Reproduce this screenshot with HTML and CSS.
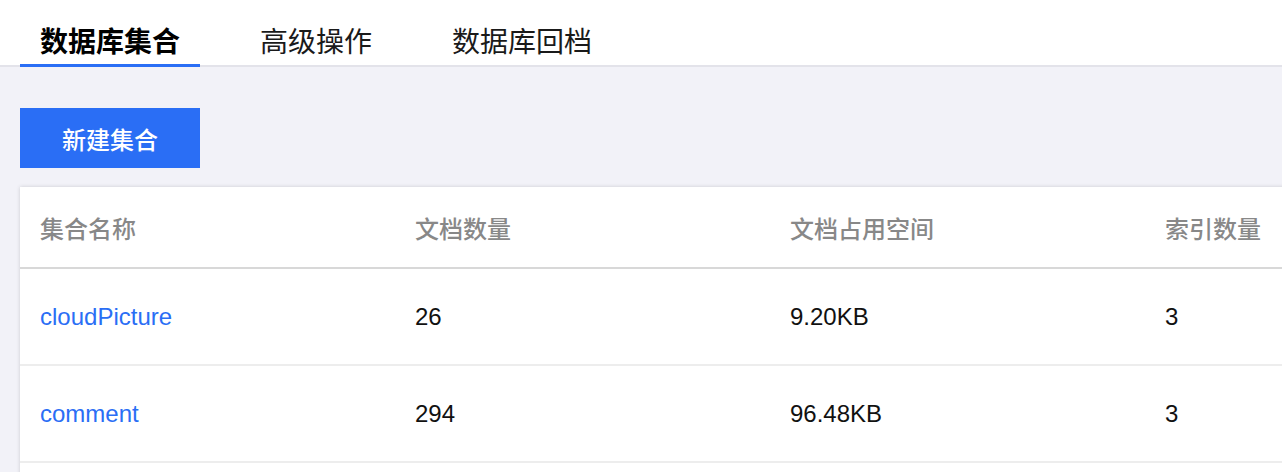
FILE: index.html
```html
<!DOCTYPE html>
<html lang="zh">
<head>
<meta charset="utf-8">
<link rel="stylesheet" href="styles.css">
</head>
<body>
<div class="tabbar">
  <div class="tab active">数据库集合</div>
  <div class="tab">高级操作</div>
  <div class="tab">数据库回档</div>
</div>
<div class="main">
  <button class="btn-primary">新建集合</button>
  <div class="card">
    <div class="row head">
      <div class="cell">集合名称</div>
      <div class="cell">文档数量</div>
      <div class="cell">文档占用空间</div>
      <div class="cell">索引数量</div>
    </div>
    <div class="row">
      <div class="cell"><a class="link">cloudPicture</a></div>
      <div class="cell">26</div>
      <div class="cell">9.20KB</div>
      <div class="cell">3</div>
    </div>
    <div class="row">
      <div class="cell"><a class="link">comment</a></div>
      <div class="cell">294</div>
      <div class="cell">96.48KB</div>
      <div class="cell">3</div>
    </div>
    <div class="row">
      <div class="cell"></div>
      <div class="cell"></div>
      <div class="cell"></div>
      <div class="cell"></div>
    </div>
  </div>
</div>
</body>
</html>
```
FILE: styles.css
```css
* { box-sizing: border-box; }
html, body {
  margin: 0;
  padding: 0;
  background: #f2f2f8;
  overflow: hidden;
  font-family: "Liberation Sans", "Noto Sans CJK SC", sans-serif;
}
.tabbar {
  display: flex;
  height: 67px;
  background: #fff;
  border-bottom: 2px solid #e3e3ea;
  padding-left: 20px;
}
.tab {
  position: relative;
  padding: 24px 20px 0;
  margin-right: 40px;
  font-size: 28px;
  line-height: 32px;
  color: #1a1a1a;
  font-family: "Noto Sans CJK SC", sans-serif;
}
.tab.active {
  font-weight: 700;
  color: #000;
}
.tab.active::after {
  content: "";
  position: absolute;
  left: 0;
  right: 0;
  bottom: -2px;
  height: 3px;
  background: #2a6ef5;
}
.main {
  padding: 41px 0 0 20px;
}
.btn-primary {
  display: block;
  width: 180px;
  height: 60px;
  border: none;
  background: #2a6ef5;
  color: #fff;
  font-family: "Noto Sans CJK SC", sans-serif;
  font-weight: 500;
  font-size: 24px;
  padding: 0;
}
.card {
  margin-top: 19px;
  width: 1600px;
  background: #fff;
  box-shadow: 0 0 4px rgba(0, 0, 0, 0.16);
}
.row {
  display: grid;
  grid-template-columns: 375px 375px 375px 375px;
  padding-left: 20px;
  padding-top: 1px;
  height: 97px;
  align-items: center;
  border-bottom: 2px solid #ededed;
  font-size: 24px;
  color: #111;
}
.row.head {
  height: 82px;
  padding-top: 0;
  border-bottom: 2px solid #d8d8d8;
  color: #888;
  font-weight: 500;
  font-family: "Noto Sans CJK SC", sans-serif;
}
.link {
  color: #2a6ef5;
  text-decoration: none;
}
```
